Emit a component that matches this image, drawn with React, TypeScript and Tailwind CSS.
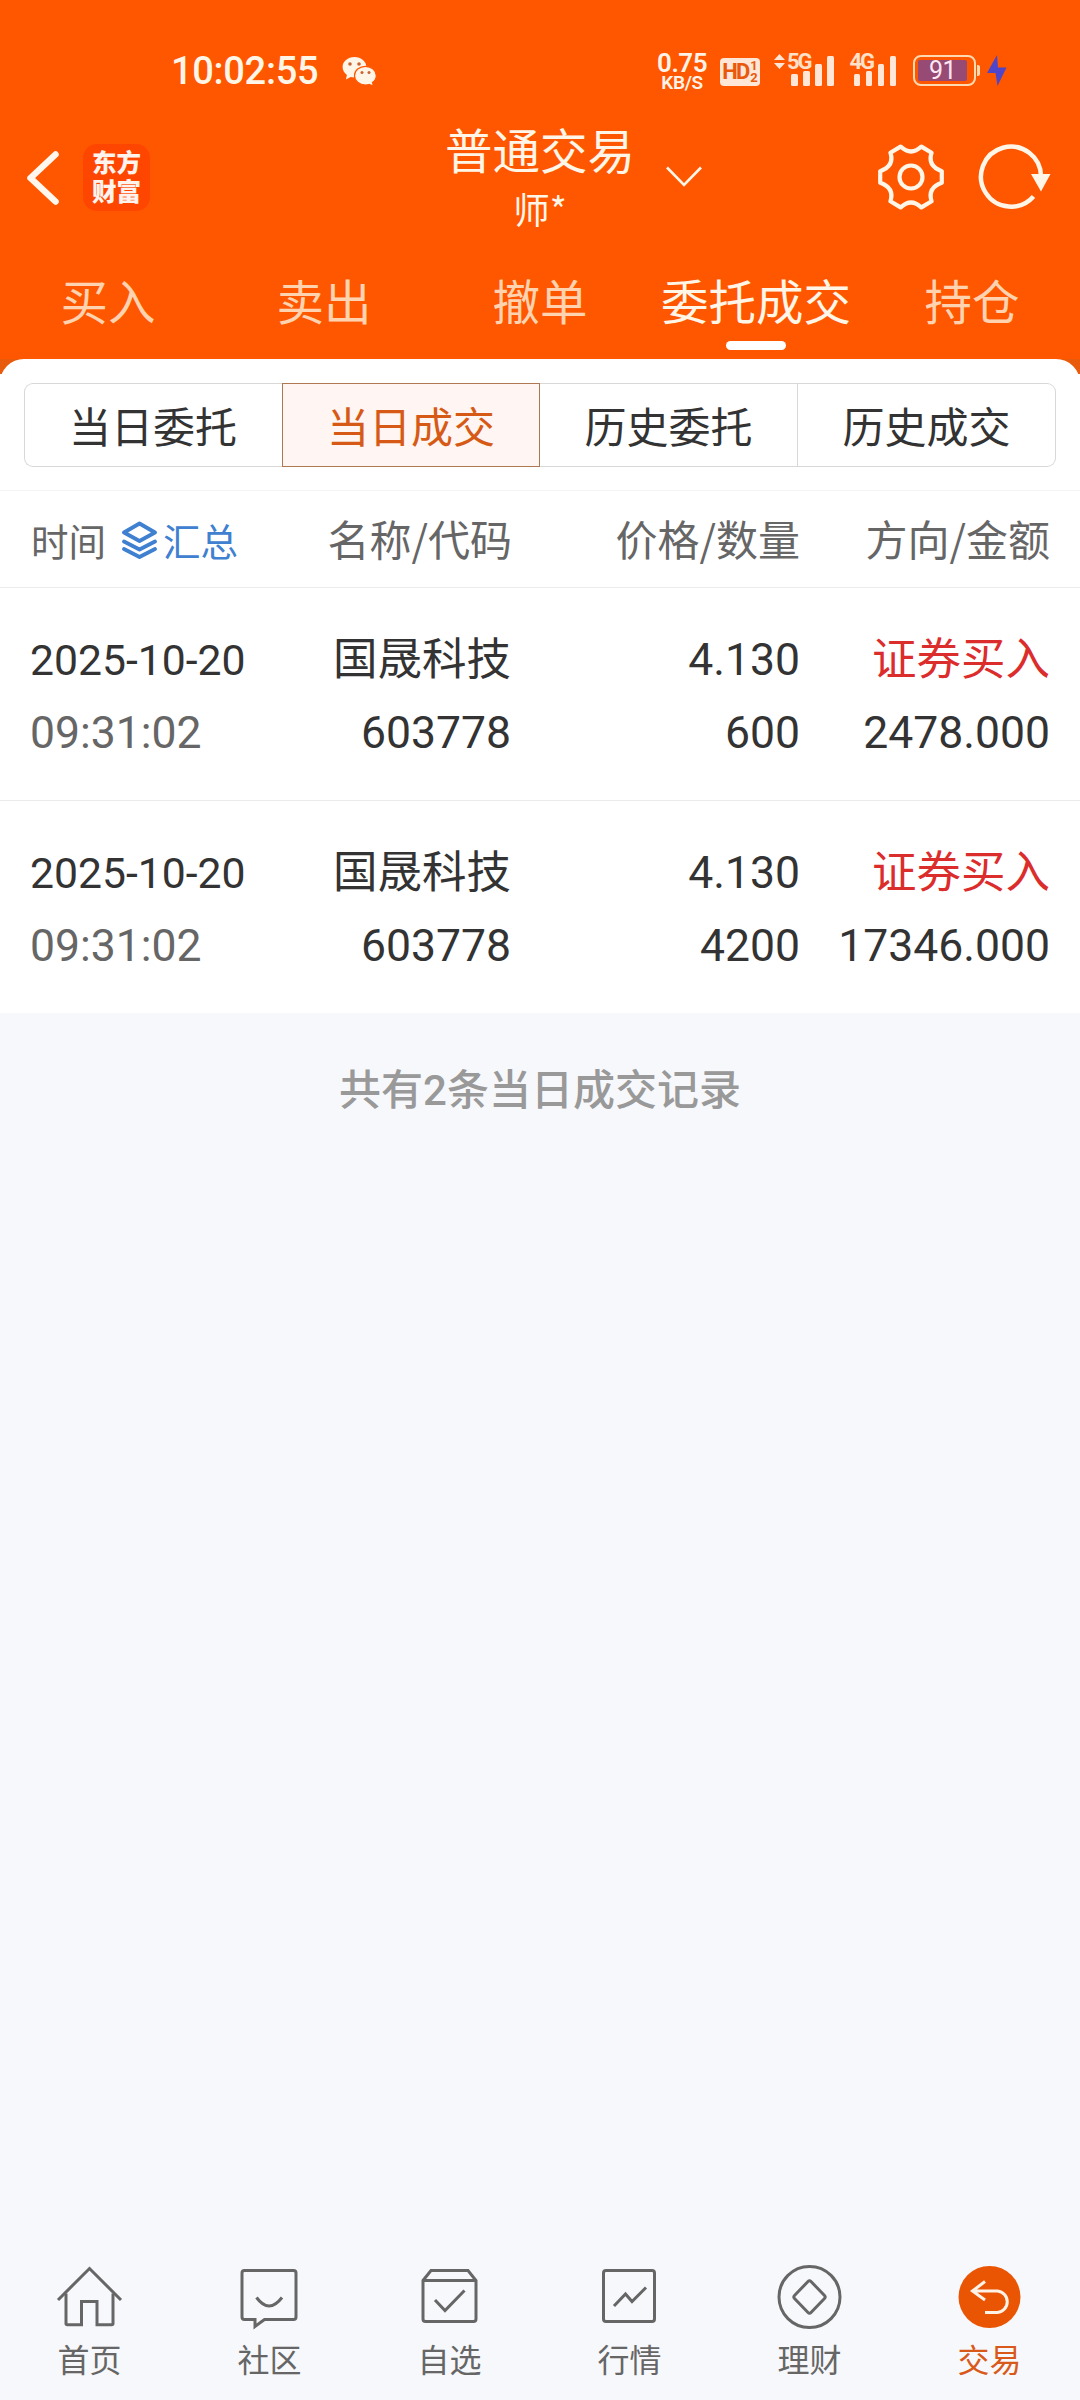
import type { ReactNode } from 'react';

interface TradeRecord {
    date: string;
    time: string;
    name: string;
    code: string;
    price: string;
    quantity: string;
    side: string;
    amount: string;
}

interface NavItem {
    label: string;
    icon: ReactNode;
    active?: boolean;
}

const mainTabs = ['买入', '卖出', '撤单', '委托成交', '持仓'];
const subTabs = ['当日委托', '当日成交', '历史委托', '历史成交'];

const records: TradeRecord[] = [
    { date: '2025-10-20', time: '09:31:02', name: '国晟科技', code: '603778', price: '4.130', quantity: '600', side: '证券买入', amount: '2478.000' },
    { date: '2025-10-20', time: '09:31:02', name: '国晟科技', code: '603778', price: '4.130', quantity: '4200', side: '证券买入', amount: '17346.000' },
];

const navItems: NavItem[] = [
    {
        label: '首页',
        icon: (
            <>
                <path d="M2 37 33.500 5.500 65 37" />
                <path d="M10 30.500V60.500q0 1.200 1.200 1.200H25.500V38.500h15.500v23.200h14.800q1.200 0 1.200-1.200V30.500" />
            </>
        ),
    },
    {
        label: '社区',
        icon: (
            <>
                <path d="M8.500 7.500h49q2.500 0 2.500 2.500v44q0 2.500-2.500 2.500H28.500L19 63.500V56.500H8.500Q6 56.500 6 54V10q0-2.500 2.500-2.500z" />
                <path d="M20.500 34.500q12.500 17 25.500 0" />
            </>
        ),
    },
    {
        label: '自选',
        icon: (
            <>
                <path d="M7 17.500 15 7.500h37l8 10v38.500q0 2.500-2.500 2.500H9.500Q7 58.500 7 56zM7 17.500h53" />
                <path d="m19 37 10 10.500L48.500 27.500" />
            </>
        ),
    },
    {
        label: '行情',
        icon: (
            <>
                <rect x="7.500" y="7.500" width="51" height="51" rx="2.500" />
                <path d="m18 43 11.500-12 6.500 7.500L50 24.500" />
            </>
        ),
    },
    {
        label: '理财',
        icon: (
            <>
                <circle cx="33.500" cy="34" r="30.500" />
                <path d="m35 18.500 13.500 14q1.500 1.500 0 3L35 49.500q-1.500 1.500-3 0L18.500 35.500q-1.500-1.500 0-3L32 18.500q1.500-1.500 3 0z" />
            </>
        ),
    },
    {
        label: '交易',
        active: true,
        icon: (
            <>
                <circle cx="33.500" cy="34" r="31" fill="#ea5504" stroke="none" />
                <path d="M29 18.500 16.500 28l12.500 9M17 28H41.500a10.800 10.800 0 0 1 0 21.500H29" stroke="#fff3e8" />
            </>
        ),
    },
];

function SignalBars() {
    return (
        <div className="flex items-end gap-[5.500px]">
            <span className="h-[12px] w-[6.500px] rounded-[1.500px] bg-[#ffe6d6]"></span>
            <span className="h-[15px] w-[6.500px] rounded-[1.500px] bg-[#ffe6d6]"></span>
            <span className="h-[22px] w-[6.500px] rounded-[1.500px] bg-[#ffe6d6]"></span>
            <span className="h-[30px] w-[6.500px] rounded-[1.500px] bg-[#ffe6d6]"></span>
        </div>
    );
}

function StatusBar() {
    return (
        <div className="flex h-[110px] items-start pt-[50px] pr-[73px] pl-[171px] font-['Roboto']">
            <span className="w-[171px] pt-px text-[38px] leading-[41px] font-medium tracking-[-0.300px] text-[#fff6e8]">10:02:55</span>
            {/* WeChat */}
            <svg className="mt-[6px] h-[30px] w-[35px]" viewBox="0 0 35 30">
                <path d="M12.500 1C5.800 1 .6 5.500.6 11c0 3.200 1.700 6 4.300 7.900l-1 4.600 4.700-2.600c1.200.3 2.600.5 3.900.5 6.600 0 11.900-4.600 11.900-10.300S19.100 1 12.500 1z" fill="#fff6e8" />
                <path d="M23.500 10.300c-6.200 0-11 4.200-11 9.400s4.800 9.300 11 9.300c1.300 0 2.500-.2 3.600-.5l4.300 1.500-.9-3.400c2.300-1.700 3.800-4.200 3.800-6.900 0-5.200-4.700-9.400-10.800-9.400z" fill="#fff6e8" stroke="#ff5700" strokeWidth="1.200" />
                <circle cx="8" cy="8" r="1.800" fill="#c86432" />
                <circle cx="17" cy="8" r="1.800" fill="#c86432" />
                <circle cx="20" cy="16.500" r="1.500" fill="#c86432" />
                <circle cx="27" cy="16.500" r="1.500" fill="#c86432" />
            </svg>
            <div className="ml-auto flex flex-col items-center pt-[2px] text-[#fff3e8]">
                <span className="text-[26px] leading-[22px] font-semibold tracking-[-0.500px]">0.75</span>
                <span className="text-[19px] leading-[18px] font-semibold tracking-[-0.300px]">KB/S</span>
            </div>
            {/* HD badge */}
            <div className="mt-[8px] ml-[13px] flex h-[28px] w-[40px] items-center justify-center rounded-[4px] bg-[#ffe6d6] text-[#e8590c]">
                <span className="text-[22px] leading-none font-bold tracking-[-2px]">HD</span>
                <span className="ml-[2px] flex flex-col text-[13px] leading-[12px] font-bold">
                    <span>1</span>
                    <span>2</span>
                </span>
            </div>
            <div className="relative mt-[6px] ml-[31px]">
                <svg className="absolute top-[-2px] left-[-17px] h-[15px] w-[11px]" viewBox="0 0 11 15">
                    <path d="M5.500 0 11 6H0zM5.500 15 0 9h11z" fill="#ffe6d6" />
                </svg>
                <span className="absolute top-[-4px] left-[-4px] text-[22px] leading-[20px] font-bold tracking-[-2px] text-[#ffe0c8]">5G</span>
                <SignalBars />
            </div>
            <div className="relative mt-[6px] ml-[20px]">
                <span className="absolute top-[-4px] left-[-4px] text-[22px] leading-[20px] font-bold tracking-[-2px] text-[#ffe0c8]">4G</span>
                <SignalBars />
            </div>
            {/* Battery */}
            <div className="mt-[5px] ml-[17px] flex h-[31px] w-[63px] items-center rounded-[8px] border-[2.500px] border-[#ffd9b0] px-[3px]">
                <span className="flex h-[21px] w-[49px] items-center justify-center rounded-[2px] bg-[#964a74] text-[25px] leading-none tracking-[-0.500px] text-[#ffe6f0]">91</span>
            </div>
            <span className="mt-[15px] ml-[1px] h-[11px] w-[3px] rounded-r-[2px] bg-[#ffd9b0]"></span>
            <svg className="mt-[5px] ml-[7px] h-[31px] w-[20px]" viewBox="0 0 20 31">
                <path d="M10 0 0 18h8.500L10.500 31 19.500 12.500H11z" fill="#4f45c8" />
            </svg>
        </div>
    );
}

function TitleBar() {
    return (
        <div className="grid h-[140px] grid-cols-3 text-white">
            <div className="flex items-center pb-[5px] pl-[24px]">
                <svg className="h-[60px] w-[38px]" viewBox="0 0 38 60" fill="none" stroke="#fff6ee" strokeWidth="6.500" strokeLinecap="round" strokeLinejoin="round">
                    <path d="M31.500 6.500 6.500 30l25 23.500" />
                </svg>
                <div className="ml-[21px] flex h-[67px] w-[67px] flex-col items-center justify-center rounded-[14px] bg-[#ff4600] pb-[4px] text-[24.500px] leading-[29px] font-black text-[#fff3ee]">
                    <span>东方</span>
                    <span>财富</span>
                </div>
            </div>
            <div className="relative flex flex-col items-center pt-[11px]">
                <span className="text-[47.500px] leading-[56px] text-[#fff6e8]">普通交易</span>
                <span className="mt-[12px] text-[36.500px] leading-[40px] text-[#fff6e8]">师*</span>
                <svg className="absolute top-[55px] left-[304px] h-[24px] w-[40px]" viewBox="0 0 40 24" fill="none" stroke="#fff6e8" strokeWidth="2.600">
                    <path d="M3 2.500 20 20 37 2.500" />
                </svg>
            </div>
            <div className="flex items-center justify-end pr-[29px] pb-[6px]">
                <svg className="h-[68px] w-[68px]" viewBox="0 0 68 68" fill="none" stroke="#fff6e8" strokeWidth="4.200" strokeLinejoin="round">
                    <path d="M23.600 3.600Q34 13.500 44.400 3.600L54.600 9.700Q50.200 23 64.800 28.200V39.800Q50.200 45 54.600 58.300L44.400 64.400Q34 54.500 23.600 64.400L13.400 58.300Q17.800 45 3.200 39.800V28.200Q17.800 23 13.400 9.700z" />
                    <circle cx="34" cy="34" r="11.500" />
                </svg>
                <svg className="ml-[32px] h-[68px] w-[74px]" viewBox="0 0 74 68" fill="none" stroke="#fff6e8" strokeWidth="4.500">
                    <path d="M56.500 53.500A30 30 0 1 1 64 34" />
                    <path d="M54 31h19.500L64 48.500z" fill="#fff6e8" stroke="none" />
                </svg>
            </div>
        </div>
    );
}

export default function App() {
    return (
        <div className="flex h-[2400px] w-[1080px] flex-col overflow-hidden bg-[#f7f8fb] font-['Noto_Sans_CJK_SC',sans-serif] text-[#333]">
            <header className="h-[359px] bg-[#ff5700]">
                <StatusBar />
                <TitleBar />
                <nav className="grid h-[109px] grid-cols-5">
                    {mainTabs.map((tab) => (
                        <div
                            key={tab}
                            className={`flex flex-col items-center pt-[22px] text-[47.500px] leading-[56px] whitespace-nowrap ${
                                tab === '委托成交' ? 'text-[#fff6e8]' : 'text-[#ffd2b0]'
                            }`}
                        >
                            {tab}
                            {tab === '委托成交' && <span className="mt-[13px] h-[9px] w-[60px] rounded-full bg-white"></span>}
                        </div>
                    ))}
                </nav>
            </header>

            {/* Sub tabs, the card's round corners sit on the last strip of the header colour */}
            <div className="bg-[linear-gradient(#e85a0c_15px,#fff_15px)]">
                <div className="rounded-t-[24px] bg-white px-[24px] pt-[24px] pb-[23px]">
                    <div className="grid h-[84px] grid-cols-4">
                        {subTabs.map((tab, index) => (
                            <div
                                key={tab}
                                className={`flex items-center justify-center border pb-[2px] text-[42px] ${
                                    index === 1
                                        ? 'border-[#b07850] bg-[#fff5f2] text-[#d65a16]'
                                        : index === 0
                                            ? 'rounded-l-[9px] border-r-0 border-[#d8d8d8] pr-px'
                                            : index === 2
                                                ? 'border-l-0 border-[#d8d8d8]'
                                                : 'rounded-r-[9px] border-l-0 border-[#d8d8d8]'
                                }`}
                            >
                                {tab}
                            </div>
                        ))}
                    </div>
                </div>
            </div>

            {/* Column titles */}
            <div className="grid h-[98px] grid-cols-[250px_262px_288px_250px] items-center border-y border-t-[#f5f5f5] border-b-[#ebebeb] bg-white pb-[2px] text-right text-[42px] leading-[56px] text-[#666]">
                <div className="flex items-center pt-[4px] pl-[31px] text-[37.500px]">
                    时间
                    <svg className="mr-[5px] ml-[15px] h-[38px] w-[37px]" viewBox="0 0 37 38" fill="none" stroke="#3f80d0" strokeWidth="3.800" strokeLinejoin="round" strokeLinecap="round">
                        <path d="M18.500 2.500 34 11.500 18.500 20 3 11.500zM3 20.500l15.500 8 15.500-8M3 28l15.500 8 15.500-8" />
                    </svg>
                    <span className="text-[#3f80d0]">汇总</span>
                </div>
                <span>名称/代码</span>
                <span>价格/数量</span>
                <span>方向/金额</span>
            </div>

            {/* Records */}
            <div className="bg-white">
                {records.map((record) => (
                    <div
                        key={record.quantity}
                        className="grid h-[213px] grid-cols-[250px_261px_289px_250px] content-start border-b border-[#ebebeb] pt-[36px] text-right font-['Roboto','Noto_Sans_CJK_SC',sans-serif] text-[44.500px] leading-[73px] last:h-[212px] last:border-b-0"
                    >
                        <span className="pl-[30px] text-left text-[42.700px]">{record.date}</span>
                        <span>{record.name}</span>
                        <span>{record.price}</span>
                        <span className="text-[#dc2d2d]">{record.side}</span>
                        <span className="pl-[30px] text-left text-[#666]">{record.time}</span>
                        <span>{record.code}</span>
                        <span>{record.quantity}</span>
                        <span className="-ml-4">{record.amount}</span>
                    </div>
                ))}
            </div>

            <p className="pt-[50px] text-center font-['Roboto','Noto_Sans_CJK_SC',sans-serif] text-[42px] leading-[56px] font-medium text-[#999]">
                共有2条当日成交记录
            </p>

            <nav className="mt-auto grid h-[137px] grid-cols-6">
                {navItems.map((item) => (
                    <div
                        key={item.label}
                        className={`flex flex-col items-center text-[32px] leading-[40px] ${item.active ? 'text-[#d9591a]' : 'text-[#666]'}`}
                    >
                        <svg className="h-[68px] w-[68px]" viewBox="0 0 68 68" fill="none" stroke="currentColor" strokeWidth="3">
                            {item.icon}
                        </svg>
                        <span className="mt-[7px] mr-px">{item.label}</span>
                    </div>
                ))}
            </nav>
        </div>
    );
}
